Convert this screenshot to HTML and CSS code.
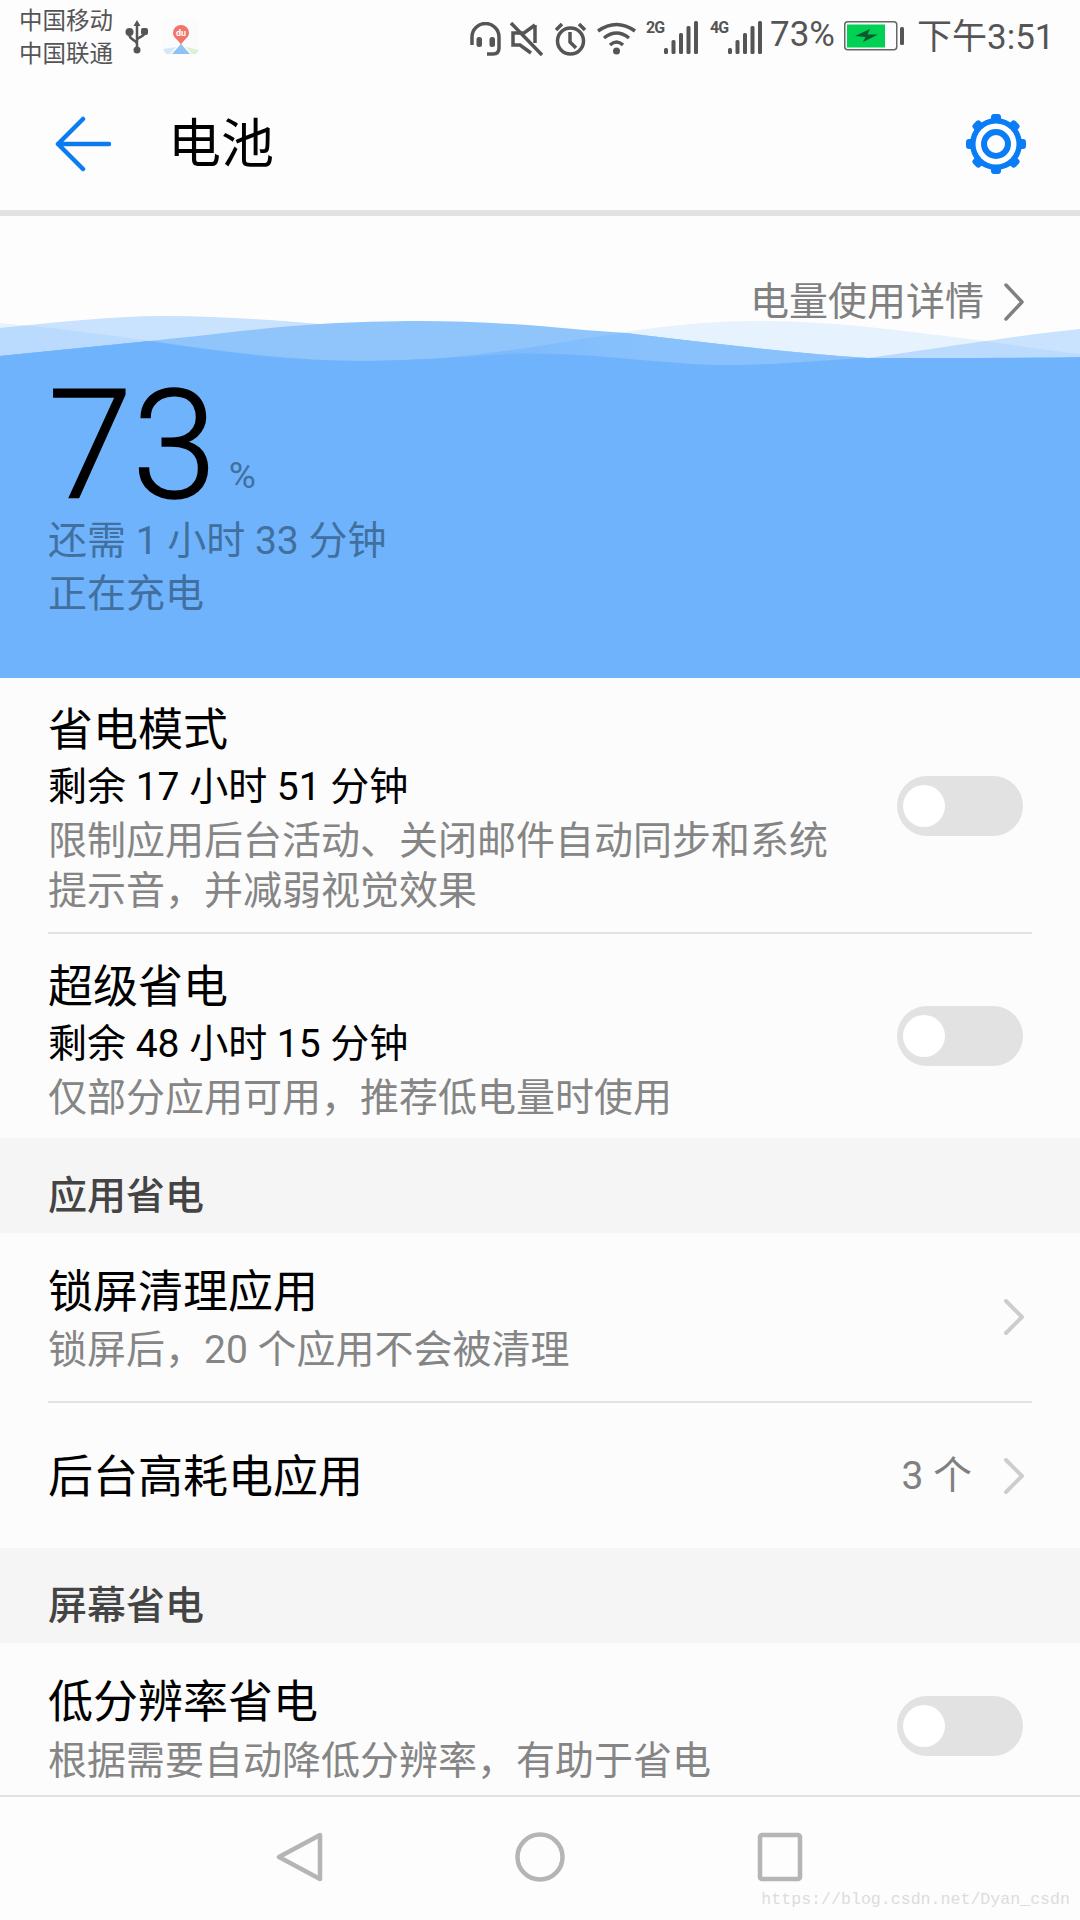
FILE: index.html
```html
<!DOCTYPE html>
<html lang="zh-CN">
<head>
  <meta charset="UTF-8">
  <title>电池</title>
  <link rel="stylesheet" href="styles.css">
</head>
<body>
  <div class="phone">
    <!-- status bar -->
    <div class="status-bar">
      <div class="carriers">
        <div>中国移动</div>
        <div>中国联通</div>
      </div>
      <svg class="usb-icon" width="24" height="34" viewBox="0 0 24 34">
        <path d="M12 3V29M12 24C12 20 4.500 20 4.500 15V13M12 20C12 17 19.500 17 19.500 13V12" fill="none" stroke="#555" stroke-width="2.500"/>
        <path d="M12 0L15.500 6H8.500Z" fill="#555"/>
        <circle cx="4.500" cy="12" r="4" fill="#555"/>
        <rect x="16" y="8" width="7" height="7" rx="2" fill="#555"/>
        <circle cx="12" cy="30" r="3.500" fill="#555"/>
      </svg>
      <svg class="map-icon" width="36" height="37" viewBox="0 0 36 37">
        <rect width="36" height="37" rx="6" fill="#fbfbfb"/>
        <path d="M0 31L13 29L7 36H3Z" fill="#d5e8f8"/>
        <path d="M23 29L36 32L33 36H29Z" fill="#e0efcf"/>
        <path d="M18 26L27 36H9Z" fill="#8fc1f5"/>
        <path d="M10 15A8 8 0 1 1 26 15C26 20 20 22 18 27C16 22 10 20 10 15Z" fill="#f2746c"/>
        <text x="18" y="18" class="map-du">du</text>
      </svg>
      <div class="status-right">
        <svg class="ic-headset" width="31" height="34" viewBox="0 0 31 34">
          <path d="M2 23V15A13.500 13.500 0 0 1 29 15V26Q29 32 23 32H17" fill="none" stroke="#555" stroke-width="3.500"/>
          <rect x="6.500" y="15" width="5.500" height="10" rx="2.500" fill="#555"/>
          <rect x="19.500" y="15" width="5.500" height="10" rx="2.500" fill="#555"/>
        </svg>
        <svg class="ic-mute" width="33" height="34" viewBox="0 0 33 34">
          <path d="M25 3V21M25 3L14 11H3V23H10L21 31" fill="none" stroke="#555" stroke-width="3.500"/>
          <path d="M1 1L32 33" stroke="#555" stroke-width="3.500"/>
        </svg>
        <svg class="ic-alarm" width="33" height="34" viewBox="0 0 33 34">
          <circle cx="16.500" cy="19" r="13" fill="none" stroke="#555" stroke-width="3.500"/>
          <path d="M16 10V20L22 26M2 8L8 2M31 8L25 2" fill="none" stroke="#555" stroke-width="3.500"/>
        </svg>
        <svg class="ic-wifi" width="39" height="34" viewBox="0 0 39 34">
          <path d="M1 9Q19.500 -4 38 9M7 16Q19.500 6 32 16M13 23Q19.500 17 26 23" fill="none" stroke="#555" stroke-width="3.500"/>
          <circle cx="19.500" cy="29" r="3.500" fill="#555"/>
        </svg>
        <div class="net-tag">2G</div>
        <svg class="ic-signal" width="34" height="34" viewBox="0 0 34 34">
          <rect x="0" y="28" width="4" height="6" rx="1.500"/>
          <rect x="7.500" y="20" width="4" height="14" rx="1.500"/>
          <rect x="15" y="13" width="4" height="21" rx="1.500"/>
          <rect x="22.500" y="6" width="4" height="28" rx="1.500"/>
          <rect x="30" y="1" width="4" height="33" rx="1.500"/>
        </svg>
        <div class="net-tag net-tag-2">4G</div>
        <svg class="ic-signal" width="34" height="34" viewBox="0 0 34 34">
          <rect x="0" y="28" width="4" height="6" rx="1.500"/>
          <rect x="7.500" y="20" width="4" height="14" rx="1.500"/>
          <rect x="15" y="13" width="4" height="21" rx="1.500"/>
          <rect x="22.500" y="6" width="4" height="28" rx="1.500"/>
          <rect x="30" y="1" width="4" height="33" rx="1.500"/>
        </svg>
        <div class="status-pct">73%</div>
        <svg class="ic-battery" width="61" height="30" viewBox="0 0 61 30">
          <rect x="0.750" y="0.750" width="52" height="28" rx="3" fill="none" stroke="#666" stroke-width="1.500"/>
          <rect x="3" y="3.500" width="38" height="23" fill="#00d155"/>
          <path d="M11 15L26 8L23.500 13.500H34L19 21L21.500 16Z" fill="#0a5a2c"/>
          <rect x="56" y="6" width="4" height="18" rx="1.500" fill="#555"/>
        </svg>
        <div class="status-time">下午3:51</div>
      </div>
    </div>

    <!-- header -->
    <div class="app-header">
      <svg class="back-arrow" width="56" height="56" viewBox="0 0 56 56">
        <path d="M54 28H3M28 3L3 28L28 53" fill="none" stroke="#0a7cf0" stroke-width="4.500" stroke-linecap="round" stroke-linejoin="round"/>
      </svg>
      <div class="app-title">电池</div>
      <svg class="gear" width="60" height="60" viewBox="-30 -30 60 60">
        <g fill="#0a7cf6">
          <circle r="26"/>
          <rect x="-5" y="-30" width="10" height="60" rx="3"/>
          <rect x="-5" y="-30" width="10" height="60" rx="3" transform="rotate(45)"/>
          <rect x="-5" y="-30" width="10" height="60" rx="3" transform="rotate(90)"/>
          <rect x="-5" y="-30" width="10" height="60" rx="3" transform="rotate(135)"/>
        </g>
        <circle r="20.500" fill="#fdfdfd"/>
        <circle r="12" fill="none" stroke="#0a7cf6" stroke-width="6"/>
      </svg>
    </div>

    <!-- battery level -->
    <div class="hero">
      <div class="hero-link">
        <span>电量使用详情</span>
        <svg width="22" height="38" viewBox="0 0 22 38">
          <path d="M3 2L19 19L3 36" fill="none" stroke="#808080" stroke-width="3.500" stroke-linecap="round" stroke-linejoin="round"/>
        </svg>
      </div>
      <svg class="waves" width="1080" height="50" viewBox="0 316 1080 50">
        <defs>
          <linearGradient id="overlap" gradientUnits="userSpaceOnUse" x1="400" y1="0" x2="650" y2="0">
            <stop offset="0" stop-color="#76b6fd"/>
            <stop offset="1" stop-color="#88c1fc"/>
          </linearGradient>
        </defs>
        <!-- far wave -->
        <path fill="#e6f2fd" d="M0 323C50 327 100 334 150 341C220 351 290 361 370 361C440 361 500 352 545 345C610 334 680 321 760 321C840 321 910 332 985 341C1020 346 1050 351 1080 354V366H0Z"/>
        <!-- second wave, see-through -->
        <path fill="#70b3fd" fill-opacity="0.37" d="M0 328C50 323 110 316 165 316C220 316 270 320 320 324V366H0ZM868 358C910 352 945 347 985 341C1020 336 1050 332 1080 329V366H868Z"/>
        <!-- third wave -->
        <path fill="#90c5fc" d="M0 356C50 351 100 346 150 341C210 335 260 328 320 324C350 322 390 321 420 321C460 321 500 323 540 326C570 329 600 331 626 333C700 342 790 353 868 358V366H0Z"/>
        <!-- where third and far wave overlap -->
        <path fill="url(#overlap)" d="M150 341C220 351 290 361 370 361C440 361 500 352 545 345C575 340 600 336 626 333C700 342 790 353 868 358V366H0V356C50 351 100 346 150 341Z"/>
        <!-- front wave -->
        <path fill="#70b3fd" d="M0 356C50 351 100 346 150 341C200 349 260 358 310 360C380 363 450 358 510 354C580 351 640 362 712 365C770 366 820 360 868 358C930 358 1010 358 1080 357V366H0Z"/>
      </svg>
      <div class="level">
        <div class="level-num">73<span class="level-pct">%</span></div>
        <div class="level-text">还需 1 小时 33 分钟</div>
        <div class="level-text">正在充电</div>
      </div>
    </div>

    <!-- settings -->
    <div class="group">
      <div class="row row-a">
        <div class="row-body">
          <div class="row-title">省电模式</div>
          <div class="row-sub">剩余 17 小时 51 分钟</div>
          <div class="row-desc row-desc-wrap">限制应用后台活动、关闭邮件自动同步和系统提示音，并减弱视觉效果</div>
        </div>
        <div class="toggle"><div class="knob"></div></div>
      </div>
      <div class="row row-b">
        <div class="row-body">
          <div class="row-title">超级省电</div>
          <div class="row-sub">剩余 48 小时 15 分钟</div>
          <div class="row-desc">仅部分应用可用，推荐低电量时使用</div>
        </div>
        <div class="toggle"><div class="knob"></div></div>
      </div>
    </div>

    <div class="section-label">应用省电</div>
    <div class="group">
      <div class="row row-c">
        <div class="row-body">
          <div class="row-title">锁屏清理应用</div>
          <div class="row-desc">锁屏后，20 个应用不会被清理</div>
        </div>
        <svg class="chevron" width="22" height="38" viewBox="0 0 22 38">
          <path d="M3 3L19 19L3 35" fill="none" stroke="#cdcdcd" stroke-width="4" stroke-linecap="round" stroke-linejoin="round"/>
        </svg>
      </div>
      <div class="row row-d">
        <div class="row-title">后台高耗电应用</div>
        <div class="row-side">
          <span class="row-count">3 个</span>
          <svg class="chevron" width="22" height="38" viewBox="0 0 22 38">
            <path d="M3 3L19 19L3 35" fill="none" stroke="#cdcdcd" stroke-width="4" stroke-linecap="round" stroke-linejoin="round"/>
          </svg>
        </div>
      </div>
    </div>

    <div class="section-label">屏幕省电</div>
    <div class="group">
      <div class="row row-e">
        <div class="row-body">
          <div class="row-title">低分辨率省电</div>
          <div class="row-desc">根据需要自动降低分辨率，有助于省电</div>
        </div>
        <div class="toggle toggle-low"><div class="knob"></div></div>
      </div>
    </div>

    <!-- navigation bar -->
    <div class="nav-bar">
      <svg width="50" height="50" viewBox="0 0 50 50">
        <path d="M45 3V47L4 25Z" fill="none" stroke="#b5b5b5" stroke-width="4.500" stroke-linejoin="round"/>
      </svg>
      <svg width="50" height="50" viewBox="0 0 50 50">
        <circle cx="25" cy="25" r="22.500" fill="none" stroke="#b5b5b5" stroke-width="4.500"/>
      </svg>
      <svg width="50" height="50" viewBox="0 0 50 50">
        <rect x="5" y="3" width="40" height="44" rx="2" fill="none" stroke="#b5b5b5" stroke-width="4.500"/>
      </svg>
    </div>
    <div class="watermark">https://blog.csdn.net/Dyan_csdn</div>
  </div>
</body>
</html>
```

FILE: styles.css
```css
body {
  margin: 0;
  padding: 0;
  background: #fdfdfd;
  font-family: Roboto, "Noto Sans CJK SC", sans-serif;
}
.phone {
  position: relative;
  width: 1080px;
  height: 1920px;
  overflow: hidden;
  background: #fdfdfd;
}

/* status bar */
.status-bar {
  display: flex;
  align-items: flex-start;
  height: 75px;
  box-sizing: border-box;
  padding: 4px 0 0 19px;
  color: #555;
}
.carriers {
  font-size: 23.500px;
  line-height: 33px;
  width: 106px;
  margin-top: 1px;
}
.usb-icon {
  margin-top: 16px;
}
.map-icon {
  margin: 14px 0 0 14px;
}
.map-du {
  font-size: 9px;
  font-weight: 700;
  fill: #fff;
  text-anchor: middle;
}
.status-right {
  display: flex;
  align-items: flex-start;
  margin-left: 271px;
  padding-top: 18px;
}
.ic-mute { margin-left: 9px; }
.ic-alarm { margin-left: 11px; }
.ic-wifi { margin-left: 10px; }
.ic-signal { margin-top: -2px; }
.ic-signal rect { fill: #555; }
.net-tag {
  margin: -2px 0 0 10px;
  width: 18px;
  font-size: 16px;
  line-height: 15px;
  font-weight: 700;
  letter-spacing: -1px;
}
.net-tag-2 { margin-left: 12px; }
.status-pct {
  margin: -5px 0 0 8px;
  font-size: 35px;
  line-height: 36px;
  width: 63px;
  white-space: nowrap;
}
.ic-battery {
  margin: -1px 0 0 11px;
}
.status-time {
  margin: -6px 0 0 12px;
  font-size: 35px;
  line-height: 44px;
  white-space: nowrap;
}

/* header */
.app-header {
  display: flex;
  align-items: center;
  height: 141px;
  box-sizing: border-box;
  border-bottom: 6px solid #e2e2e2;
  padding: 3px 54px 0 55px;
  background: #fdfdfd;
}
.app-title {
  flex: 1;
  margin: 2px 0 0 57px;
  font-size: 53px;
  line-height: 60px;
  color: #000;
}

/* hero */
.hero-link {
  display: flex;
  justify-content: flex-end;
  align-items: center;
  gap: 19px;
  height: 100px;
  box-sizing: border-box;
  padding: 72px 55px 0 0;
  font-size: 39px;
  line-height: 50px;
  color: #808080;
}
.waves {
  display: block;
}
.level {
  height: 312px;
  box-sizing: border-box;
  padding: 15px 0 0 48px;
  background: #70b3fd;
}
.level-num {
  font-size: 152px;
  line-height: 130px;
  font-weight: 300;
  -webkit-text-stroke: 1.500px #000;
  color: #000;
  margin-bottom: 4px;
}
.level-pct {
  margin-left: 12px;
  font-size: 37px;
  line-height: 0;
  font-weight: 400;
  -webkit-text-stroke: 0;
  color: #41709f;
  vertical-align: 10px;
}
.level-text {
  font-size: 39px;
  line-height: 53px;
  color: #41709f;
}

/* rows */
.group {
  background: #fcfcfc;
}
.row {
  display: flex;
  justify-content: space-between;
  align-items: center;
  margin: 0 48px;
  border-bottom: 2px solid #e2e2e2;
  box-sizing: border-box;
}
.row-body {
  display: flex;
  flex-direction: column;
}
.row-title {
  font-size: 45px;
  line-height: 60px;
  color: #000;
}
.row-sub {
  font-size: 39px;
  line-height: 50px;
  margin-top: 1px;
  color: #000;
}
.row-desc {
  font-size: 39px;
  line-height: 50px;
  margin-top: 4px;
  color: #858585;
}
.row-desc-wrap {
  width: 790px;
}
.row-a { height: 256px; padding-top: 1px; }
.row-a .row-body { padding-top: 6px; }
.row-b { height: 204px; border-bottom: none; }
.row-b .row-body { padding-top: 9px; }
.row-c { height: 170px; }
.row-c .row-body { padding-top: 3px; }
.row-d { height: 145px; border-bottom: none; }
.row-e { height: 152px; border-bottom: none; }
.row-e .row-body { padding-top: 20px; }
.row-c .row-desc { margin-top: 2px; }
.row-e .row-desc { margin-top: 3px; }
.row-d .row-title { margin-top: 4px; }
.row-side {
  display: flex;
  align-items: center;
  gap: 31px;
  margin-right: 7px;
}
.row-c .chevron { margin-right: 7px; }
.row-count {
  font-size: 39px;
  line-height: 50px;
  color: #808080;
}

/* switch */
.toggle {
  width: 126px;
  height: 60px;
  box-sizing: border-box;
  padding: 9px 0 0 6px;
  margin-right: 9px;
  border-radius: 30px;
  background: #e2e2e2;
}
.toggle-low {
  margin-top: 14px;
}
.knob {
  width: 42px;
  height: 42px;
  border-radius: 50%;
  background: #fff;
}

/* section headers */
.section-label {
  height: 95px;
  box-sizing: border-box;
  padding: 33px 0 0 48px;
  background: #f5f5f5;
  font-size: 39px;
  line-height: 50px;
  font-weight: 500;
  color: #444;
}

/* nav */
.nav-bar {
  display: flex;
  justify-content: center;
  gap: 190px;
  height: 125px;
  box-sizing: border-box;
  padding-top: 35px;
  border-top: 2px solid #e2e2e2;
  background: #fdfdfd;
}
.watermark {
  position: absolute;
  right: 10px;
  bottom: 10px;
  font-family: "Liberation Mono", monospace;
  font-size: 16.600px;
  line-height: 20px;
  color: #dcdcdc;
}
```
